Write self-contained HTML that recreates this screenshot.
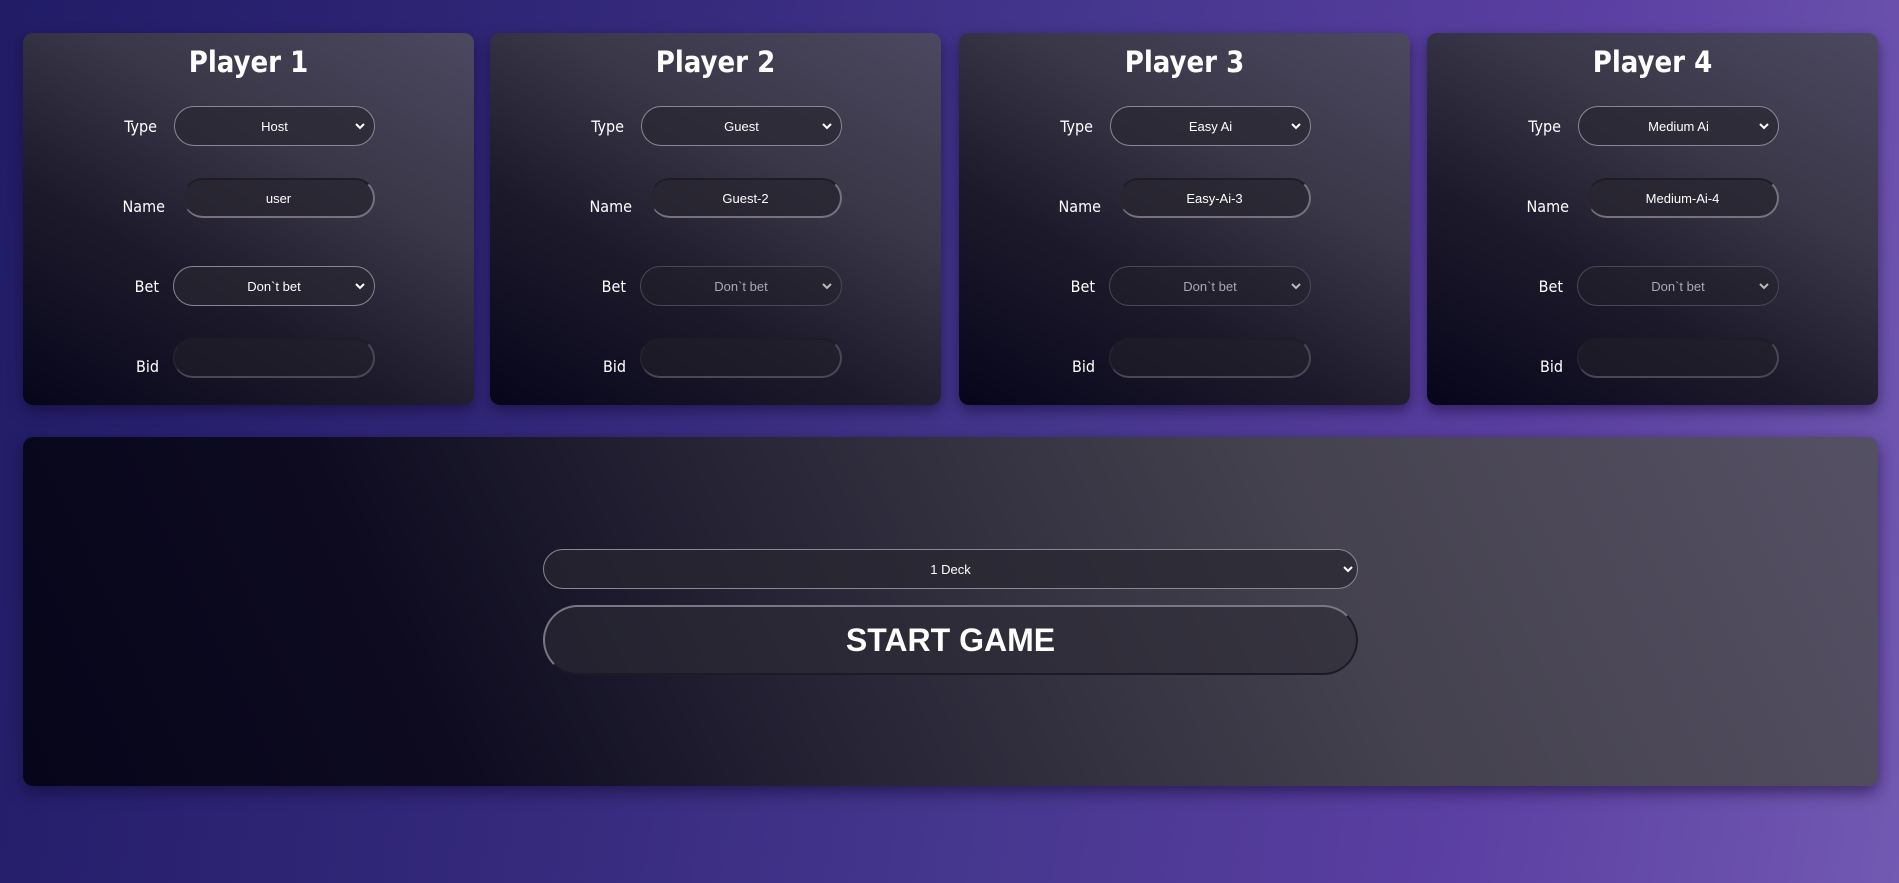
<!DOCTYPE html>
<html><head><meta charset="utf-8"><style>
*{box-sizing:border-box;margin:0;padding:0}
html,body{width:1899px;height:883px;overflow:hidden}
body{background:linear-gradient(100deg,#211c66 0%,#33287a 30%,#46378f 55%,#5b3fa2 78%,#7259b2 100%);font-family:"Liberation Sans",sans-serif;position:relative}
.card{position:absolute;top:33px;width:451px;height:372px;border-radius:10px;background:linear-gradient(30deg,#07051a 0%,#1c1a2a 35%,#3a3748 65%,#4c4860 100%);box-shadow:0 6px 14px rgba(20,10,50,.55)}
.title{position:absolute;top:12px;left:0;width:100%;text-align:center;color:#fff;font-weight:bold;font-size:29px;font-family:"DejaVu Sans Condensed","DejaVu Sans","Liberation Sans",sans-serif;font-stretch:condensed}
.lbl{position:absolute;color:#fff;font-size:16px;font-family:"DejaVu Sans Condensed","DejaVu Sans","Liberation Sans",sans-serif;font-stretch:condensed;text-align:right;width:80px}
.sel{position:absolute;left:151px;width:201px;height:40px;border-radius:20px;border:1.5px solid #8a8794;background:rgba(40,38,48,.7);color:#fff;font-size:13px;display:flex;align-items:center;justify-content:center}
.sel svg{position:absolute;right:9px;top:15px}
.dis{border-color:#4a4756;color:#aaa8b0;background:rgba(35,33,42,.55)}
.inp{position:absolute;height:40px;border-radius:20px;background:rgba(40,38,48,.75);border-bottom:2px solid #76737f;border-right:2px solid #76737f;border-top:2px solid #1e1c26;border-left:1px solid #2a2834;color:#fff;font-size:13px;display:flex;align-items:center;justify-content:center}
.inp.empty{border-bottom-color:#4a4756;border-right-color:#4a4756;background:rgba(35,33,42,.55)}
.panel{position:absolute;left:23px;top:437px;width:1855px;height:349px;border-radius:10px;background:linear-gradient(65deg,#06051a 0%,#0e0b20 22%,#2a2838 45%,#45424f 70%,#555064 100%);box-shadow:0 6px 16px rgba(20,10,50,.6)}
</style></head><body>

<div class="card" style="left:23px">
 <div class="title">Player 1</div>
 <div class="lbl" style="left:54px;top:84px">Type</div>
 <div class="sel" style="top:73px">Host<svg width="10" height="8" viewBox="0 0 10 8"><path d="M1 2l4 4 4-4" stroke="#fff" stroke-width="2" fill="none"/></svg></div>
 <div class="lbl" style="left:62px;top:164px">Name</div>
 <div class="inp" style="left:160px;top:145px;width:192px">user</div>
 <div class="lbl" style="left:56px;top:244px">Bet</div>
 <div class="sel" style="top:233px;left:150px;width:202px">Don`t bet<svg width="10" height="8" viewBox="0 0 10 8"><path d="M1 2l4 4 4-4" stroke="#fff" stroke-width="2" fill="none"/></svg></div>
 <div class="lbl" style="left:56px;top:324px">Bid</div>
 <div class="inp empty" style="left:150px;top:305px;width:202px"></div>
</div>

<div class="card" style="left:490px">
 <div class="title">Player 2</div>
 <div class="lbl" style="left:54px;top:84px">Type</div>
 <div class="sel" style="top:73px">Guest<svg width="10" height="8" viewBox="0 0 10 8"><path d="M1 2l4 4 4-4" stroke="#fff" stroke-width="2" fill="none"/></svg></div>
 <div class="lbl" style="left:62px;top:164px">Name</div>
 <div class="inp" style="left:160px;top:145px;width:192px">Guest-2</div>
 <div class="lbl" style="left:56px;top:244px">Bet</div>
 <div class="sel dis" style="top:233px;left:150px;width:202px">Don`t bet<svg width="10" height="8" viewBox="0 0 10 8"><path d="M1 2l4 4 4-4" stroke="#bbb" stroke-width="2" fill="none"/></svg></div>
 <div class="lbl" style="left:56px;top:324px">Bid</div>
 <div class="inp empty" style="left:150px;top:305px;width:202px"></div>
</div>

<div class="card" style="left:959px">
 <div class="title">Player 3</div>
 <div class="lbl" style="left:54px;top:84px">Type</div>
 <div class="sel" style="top:73px">Easy Ai<svg width="10" height="8" viewBox="0 0 10 8"><path d="M1 2l4 4 4-4" stroke="#fff" stroke-width="2" fill="none"/></svg></div>
 <div class="lbl" style="left:62px;top:164px">Name</div>
 <div class="inp" style="left:160px;top:145px;width:192px">Easy-Ai-3</div>
 <div class="lbl" style="left:56px;top:244px">Bet</div>
 <div class="sel dis" style="top:233px;left:150px;width:202px">Don`t bet<svg width="10" height="8" viewBox="0 0 10 8"><path d="M1 2l4 4 4-4" stroke="#bbb" stroke-width="2" fill="none"/></svg></div>
 <div class="lbl" style="left:56px;top:324px">Bid</div>
 <div class="inp empty" style="left:150px;top:305px;width:202px"></div>
</div>

<div class="card" style="left:1427px">
 <div class="title">Player 4</div>
 <div class="lbl" style="left:54px;top:84px">Type</div>
 <div class="sel" style="top:73px">Medium Ai<svg width="10" height="8" viewBox="0 0 10 8"><path d="M1 2l4 4 4-4" stroke="#fff" stroke-width="2" fill="none"/></svg></div>
 <div class="lbl" style="left:62px;top:164px">Name</div>
 <div class="inp" style="left:160px;top:145px;width:192px">Medium-Ai-4</div>
 <div class="lbl" style="left:56px;top:244px">Bet</div>
 <div class="sel dis" style="top:233px;left:150px;width:202px">Don`t bet<svg width="10" height="8" viewBox="0 0 10 8"><path d="M1 2l4 4 4-4" stroke="#bbb" stroke-width="2" fill="none"/></svg></div>
 <div class="lbl" style="left:56px;top:324px">Bid</div>
 <div class="inp empty" style="left:150px;top:305px;width:202px"></div>
</div>

<div class="panel">
 <div class="sel" style="left:520px;top:112px;width:815px;height:40px">1 Deck<svg width="10" height="8" viewBox="0 0 10 8" style="right:4px"><path d="M1 2l4 4 4-4" stroke="#fff" stroke-width="2" fill="none"/></svg></div>
 <div class="inp" style="left:520px;top:168px;width:815px;height:70px;border-radius:35px;border-top:2px solid #7a7784;border-left:2px solid #7a7784;border-bottom:2px solid #1c1a24;border-right:2px solid #1c1a24;font-size:32px;font-weight:bold;background:rgba(45,43,53,.6)">START GAME</div>
</div>

</body></html>
